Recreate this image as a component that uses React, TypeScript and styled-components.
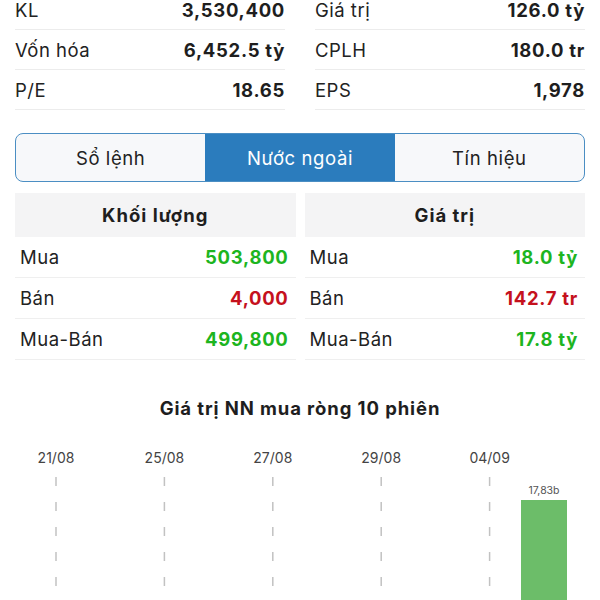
import React from 'react';
import styled, { createGlobalStyle } from 'styled-components';

const GlobalStyle = createGlobalStyle`
  html, body {
    margin: 0;
    padding: 0;
    background: #ffffff;
    overflow: hidden;
  }
  body {
    font-family: Inter, "Noto Sans", "Liberation Sans", sans-serif;
    color: #222222;
  }
`;

const Page = styled.div`
  width: 600px;
  height: 600px;
  padding: 0 15px;
  box-sizing: border-box;
  overflow: hidden;
`;

const StatsGrid = styled.div`
  margin-top: -10px;
  display: grid;
  grid-template-columns: 1fr 1fr;
  column-gap: 30px;
`;

const StatRow = styled.div`
  height: 40px;
  box-sizing: border-box;
  display: flex;
  align-items: center;
  justify-content: space-between;
  border-bottom: 1px solid #ececec;
  font-size: 18.5px;
  letter-spacing: 0.5px;
`;

const StatLabel = styled.span`
  color: #222222;
`;

const StatValue = styled.span`
  font-weight: 700;
  letter-spacing: 0.7px;
  color: #1e1e1e;
`;

const Tabs = styled.div`
  margin-top: 23px;
  height: 49px;
  box-sizing: border-box;
  display: grid;
  grid-template-columns: repeat(3, 1fr);
  border: 1.5px solid #4b8ec3;
  border-radius: 8px;
  overflow: hidden;
  background: #f7f8fa;
`;

const Tab = styled.div<{ $active?: boolean }>`
  display: flex;
  align-items: center;
  justify-content: center;
  font-size: 18.5px;
  letter-spacing: 0.6px;
  color: ${p => (p.$active ? '#ffffff' : '#222222')};
  background: ${p => (p.$active ? '#2b7cbd' : 'transparent')};
`;

const Tables = styled.div`
  margin-top: 11px;
  display: grid;
  grid-template-columns: 1fr 1fr;
  column-gap: 9px;
`;

const TableHeader = styled.div`
  height: 44px;
  display: flex;
  align-items: center;
  justify-content: center;
  background: #f4f4f5;
  font-size: 18.5px;
  font-weight: 700;
  letter-spacing: 1px;
  color: #1e1e1e;
`;

const TableRow = styled.div`
  height: 41px;
  box-sizing: border-box;
  padding: 0 7px 0 5px;
  display: flex;
  align-items: center;
  justify-content: space-between;
  border-bottom: 1px solid #efefef;
  font-size: 18.5px;
  letter-spacing: 0.5px;
`;

const TableValue = styled.span<{ $tone: 'up' | 'down' }>`
  font-weight: 700;
  letter-spacing: 0.7px;
  color: ${p => (p.$tone === 'up' ? '#1db51f' : '#c5111d')};
`;

const ChartTitle = styled.div`
  margin-top: 36px;
  height: 24px;
  line-height: 24px;
  text-align: center;
  font-size: 18.5px;
  font-weight: 700;
  letter-spacing: 0.9px;
  color: #1e1e1e;
`;

const ChartWrap = styled.div`
  margin: 0 -15px;
  height: 180px;
`;

const stats: [string, string, string, string][] = [
  ['KL', '3,530,400', 'Giá trị', '126.0 tỷ'],
  ['Vốn hóa', '6,452.5 tỷ', 'CPLH', '180.0 tr'],
  ['P/E', '18.65', 'EPS', '1,978'],
];

type Cell = { label: string; value: string; tone: 'up' | 'down' };

const volume: Cell[] = [
  { label: 'Mua', value: '503,800', tone: 'up' },
  { label: 'Bán', value: '4,000', tone: 'down' },
  { label: 'Mua-Bán', value: '499,800', tone: 'up' },
];

const amount: Cell[] = [
  { label: 'Mua', value: '18.0 tỷ', tone: 'up' },
  { label: 'Bán', value: '142.7 tr', tone: 'down' },
  { label: 'Mua-Bán', value: '17.8 tỷ', tone: 'up' },
];

// 10 sessions, a date label on every other one
const sessions = ['21/08', '', '25/08', '', '27/08', '', '29/08', '', '04/09', ''];

const NetChart = () => {
  const step = 54.2;
  const x0 = 56;
  return (
    <svg width="600" height="180" viewBox="0 0 600 180">
      {sessions.map((d, i) =>
        d ? (
          <g key={i}>
            <text
              x={x0 + i * step}
              y={43}
              textAnchor="middle"
              fontSize="14"
              fill="#444"
              fontFamily="Inter, 'Noto Sans', sans-serif"
            >
              {d}
            </text>
            <line
              x1={x0 + i * step}
              x2={x0 + i * step}
              y1={57}
              y2={180}
              stroke="#c2c2c2"
              strokeWidth="1.5"
              strokeDasharray="9 16"
            />
          </g>
        ) : null
      )}
      <text
        x={544}
        y={74}
        textAnchor="middle"
        fontSize="10.5"
        fill="#555"
        fontFamily="Inter, 'Noto Sans', sans-serif"
      >
        17,83b
      </text>
      <rect x={521} y={80} width={46} height={100} fill="#6cbd69" />
    </svg>
  );
};

export default function App() {
  return (
    <>
      <GlobalStyle />
      <Page>
        <StatsGrid>
          {stats.map(([l1, v1, l2, v2]) => (
            <React.Fragment key={l1}>
              <StatRow>
                <StatLabel>{l1}</StatLabel>
                <StatValue>{v1}</StatValue>
              </StatRow>
              <StatRow>
                <StatLabel>{l2}</StatLabel>
                <StatValue>{v2}</StatValue>
              </StatRow>
            </React.Fragment>
          ))}
        </StatsGrid>

        <Tabs>
          <Tab>Sổ lệnh</Tab>
          <Tab $active>Nước ngoài</Tab>
          <Tab>Tín hiệu</Tab>
        </Tabs>

        <Tables>
          {[
            { title: 'Khối lượng', rows: volume },
            { title: 'Giá trị', rows: amount },
          ].map(t => (
            <div key={t.title}>
              <TableHeader>{t.title}</TableHeader>
              {t.rows.map(r => (
                <TableRow key={r.label}>
                  <StatLabel>{r.label}</StatLabel>
                  <TableValue $tone={r.tone}>{r.value}</TableValue>
                </TableRow>
              ))}
            </div>
          ))}
        </Tables>

        <ChartTitle>Giá trị NN mua ròng 10 phiên</ChartTitle>
        <ChartWrap>
          <NetChart />
        </ChartWrap>
      </Page>
    </>
  );
}
